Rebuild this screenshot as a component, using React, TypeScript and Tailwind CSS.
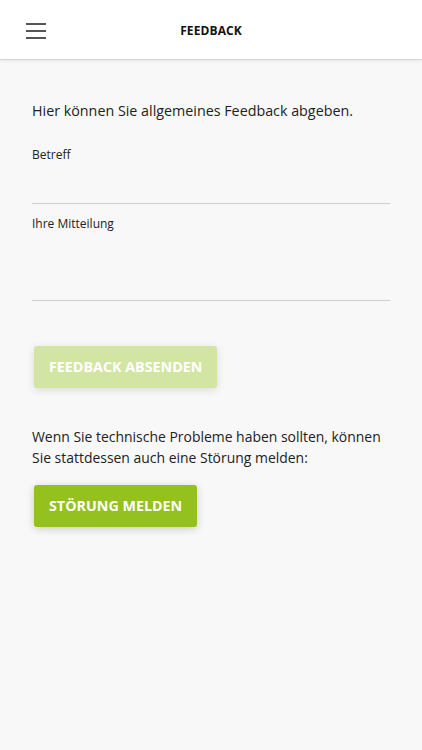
export default function App() {
  return (
    <div
      className="min-h-[750px] bg-[#f8f8f8] text-[#222]"
      style={{ fontFamily: '"Open Sans", "Noto Sans", sans-serif' }}
    >
      {/* Header */}
      <header className="relative flex h-[60px] items-center justify-center border-b border-[#d6d6d6] bg-white shadow-[0_1px_3px_rgba(0,0,0,0.08)]">
        <button className="absolute left-[26px] top-[23px] flex w-[20px] flex-col gap-[5.5px]">
          <span className="block h-[1.5px] w-full bg-[#555]" />
          <span className="block h-[1.5px] w-full bg-[#555]" />
          <span className="block h-[1.5px] w-full bg-[#555]" />
        </button>
        <h1 className="pt-[2px] text-[12px] font-bold tracking-[0.1px] text-[#111]">FEEDBACK</h1>
      </header>

      <main className="px-[32px] pt-[40px]">
        <p className="text-[14.3px] leading-[22px]">Hier können Sie allgemeines Feedback abgeben.</p>

        <div className="mt-[24px]">
          <label className="block text-[12px] leading-[18px]">Betreff</label>
          <input className="block h-[40px] w-full border-b border-[#cfcfcf] bg-transparent outline-none" />
        </div>

        <div className="mt-[11px]">
          <label className="block text-[12px] leading-[18px]">Ihre Mitteilung</label>
          <textarea className="block h-[68px] w-full resize-none border-b border-[#cfcfcf] bg-transparent outline-none" />
        </div>

        <button className="ml-[2px] mt-[45px] h-[42px] rounded-[3px] bg-[#d3e5a2] px-[15px] text-[14.3px] font-bold text-white shadow-[0_2px_8px_rgba(0,0,0,0.12)]">
          FEEDBACK ABSENDEN
        </button>

        <p className="-mr-[4px] mt-[38px] text-[13.95px] leading-[21px]">
          Wenn Sie technische Probleme haben sollten, können Sie stattdessen auch eine Störung melden:
        </p>

        <button className="ml-[2px] mt-[17px] h-[42px] rounded-[3px] bg-[#95c11f] px-[15px] text-[14.3px] font-bold text-white shadow-[0_2px_8px_rgba(0,0,0,0.18)]">
          STÖRUNG MELDEN
        </button>
      </main>
    </div>
  );
}
